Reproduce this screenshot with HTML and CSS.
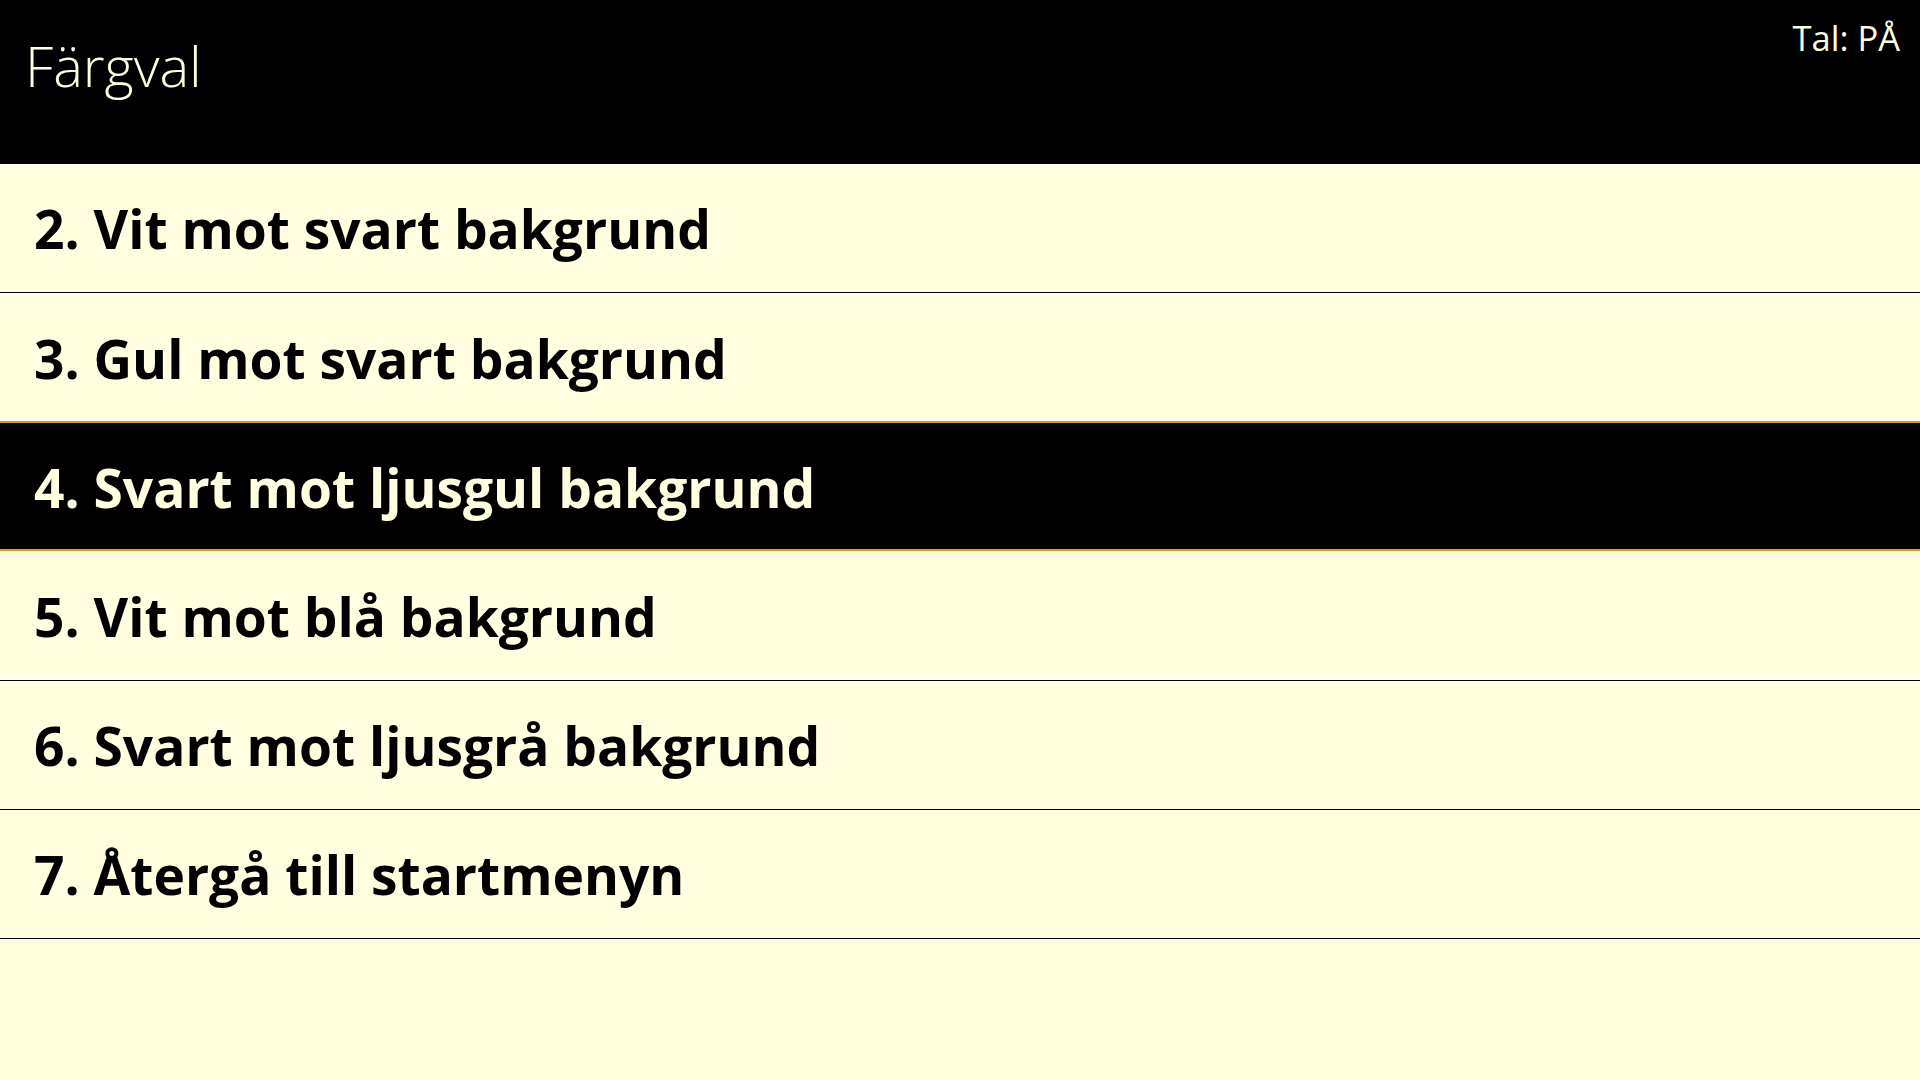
FILE: index.html
```html
<!DOCTYPE html>
<html lang="sv">
<head>
<meta charset="utf-8">
<title>Färgval</title>
<link rel="stylesheet" href="styles.css">
</head>
<body>
<header class="topbar">
  <h1 class="title">Färgval</h1>
  <div class="speech">Tal: PÅ</div>
</header>
<ul class="menu">
  <li class="item">2. Vit mot svart bakgrund</li>
  <li class="item">3. Gul mot svart bakgrund</li>
  <li class="item selected">4. Svart mot ljusgul bakgrund</li>
  <li class="item">5. Vit mot blå bakgrund</li>
  <li class="item">6. Svart mot ljusgrå bakgrund</li>
  <li class="item">7. Återgå till startmenyn</li>
</ul>
</body>
</html>
```

FILE: styles.css
```css
html, body {
  margin: 0;
  padding: 0;
}
body {
  width: 1920px;
  height: 1080px;
  overflow: hidden;
  background: #ffffe0;
  font-family: "Open Sans", "Noto Sans", sans-serif;
  color: #000;
}
.topbar {
  height: 164px;
  background: #000;
  color: #ffffe0;
  display: flex;
  justify-content: space-between;
  align-items: flex-start;
  padding: 0 20px 0 25px;
  box-sizing: border-box;
}
.title {
  margin: 25px 0 0;
  font-weight: 300;
  font-size: 56px;
  line-height: 80px;
}
.speech {
  margin-top: 13px;
  font-size: 34.5px;
  line-height: 50px;
  font-weight: 400;
}
.menu {
  list-style: none;
  margin: 0;
  padding: 0;
}
.item {
  height: 129.17px;
  box-sizing: border-box;
  border-bottom: 1px solid #000;
  padding-left: 34px;
  padding-top: 2px;
  display: flex;
  align-items: center;
  font-weight: 700;
  font-size: 53.3px;
  line-height: 1;
}
.selected {
  position: relative;
  margin-top: -1px;
  height: 130.17px;
  background: #000;
  color: #ffffe0;
  border-top: 2px solid #d89c24;
  border-bottom: 2px solid #d89c24;
}
```
